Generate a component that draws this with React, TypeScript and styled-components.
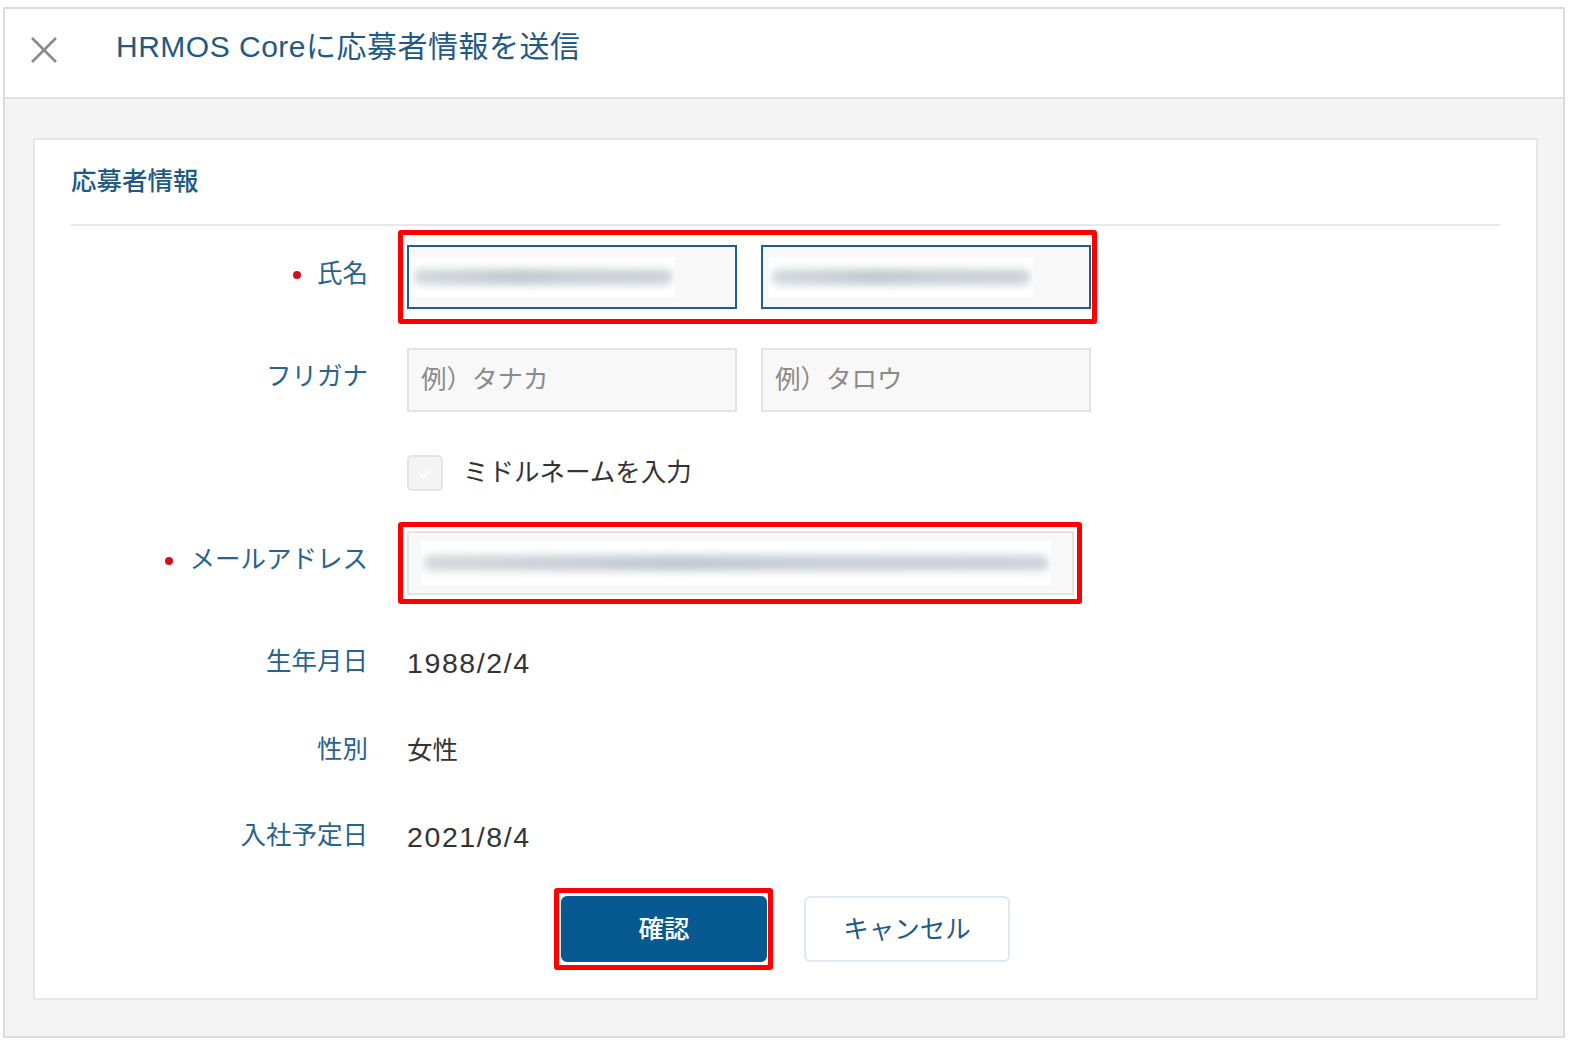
import React from 'react';
import styled, { createGlobalStyle } from 'styled-components';

const GlobalStyle = createGlobalStyle`
  html, body {
    margin: 0;
    padding: 0;
    background: #ffffff;
  }
  body {
    font-family: "Liberation Sans", "Noto Sans CJK JP", sans-serif;
    color: #333333;
  }
`;

// Outer modal frame
const Frame = styled.div`
  margin: 7px 11px 0 3px;
  height: 1031px;
  box-sizing: border-box;
  border: 2px solid #dcdcdc;
  display: flex;
  flex-direction: column;
  background: #f4f4f4;
`;

const Header = styled.div`
  height: 92px;
  box-sizing: border-box;
  display: flex;
  align-items: center;
  padding: 0 0 6px 24px;
  background: #ffffff;
  border-bottom: 2px solid #e2e2e2;
`;

const CloseButton = styled.button`
  width: 30px;
  height: 30px;
  padding: 0;
  border: none;
  background: transparent;
  display: flex;
  align-items: center;
  justify-content: center;
  cursor: pointer;
`;

const Title = styled.h1`
  margin: 0 0 0 57px;
  padding-bottom: 6px;
  font-size: 30px;
  line-height: 40px;
  font-weight: 400;
  color: #1f5a86;
  letter-spacing: 0.5px;
`;

const Body = styled.div`
  flex: 1;
  padding: 39px 25px 36px 28px;
`;

const Card = styled.div`
  height: 100%;
  box-sizing: border-box;
  background: #ffffff;
  border: 2px solid #e6e6e6;
  padding: 23px 36px 36px;
`;

const SectionTitle = styled.h2`
  margin: 0;
  padding-bottom: 25px;
  font-size: 25.5px;
  line-height: 36px;
  font-weight: 500;
  color: #1f5a86;
  border-bottom: 2px solid #e8e8e8;
`;

// One form row: label column + field column
const Row = styled.div<{ $top: number; $height: number }>`
  display: grid;
  grid-template-columns: 297px 1fr;
  column-gap: 39px;
  align-items: center;
  margin-top: ${(p) => p.$top}px;
  height: ${(p) => p.$height}px;
`;

const Label = styled.div`
  display: flex;
  justify-content: flex-end;
  align-items: center;
  padding-bottom: 8px;
  font-size: 25.5px;
  line-height: 36px;
  color: #28628f;
  white-space: nowrap;
`;

const Required = styled.span`
  width: 8px;
  height: 8px;
  border-radius: 50%;
  background: #d0101b;
  margin: 4px 16px 0 0;
`;

const Value = styled.div<{ $numeric?: boolean }>`
  padding-bottom: ${(p) => (p.$numeric ? 4 : 6)}px;
  font-size: ${(p) => (p.$numeric ? 28.5 : 25.5)}px;
  letter-spacing: ${(p) => (p.$numeric ? 1.6 : 0)}px;
  line-height: 36px;
  color: #333333;
`;

const Fields = styled.div`
  position: relative;
  display: flex;
  gap: 24px;
  width: fit-content;
`;

// Red annotation box drawn over the screenshot
const Highlight = styled.div<{ $t: number; $r: number; $b: number; $l: number }>`
  position: absolute;
  top: -${(p) => p.$t}px;
  right: -${(p) => p.$r}px;
  bottom: -${(p) => p.$b}px;
  left: -${(p) => p.$l}px;
  border: 5px solid #ff0000;
  border-radius: 3px;
  pointer-events: none;
`;

const Input = styled.div<{ $width: number; $focused?: boolean }>`
  width: ${(p) => p.$width}px;
  height: 64px;
  box-sizing: border-box;
  display: flex;
  align-items: center;
  padding: 0 0 0 12px;
  background: #f8f8f8;
  border: 2px solid ${(p) => (p.$focused ? '#1b5f93' : '#e3e3e3')};
`;

const Placeholder = styled.span`
  padding-bottom: 8px;
  font-size: 25.5px;
  color: #8a8a8a;
`;

// Masked (blurred) personal data
const Mask = styled.div<{ $width: number; $height: number; $offset: number }>`
  margin-left: ${(p) => p.$offset}px;
  width: ${(p) => p.$width}px;
  height: ${(p) => p.$height}px;
  background: #ffffff;
  display: flex;
  align-items: center;
  overflow: hidden;
`;

const MaskLine = styled.div`
  flex: 1;
  height: 16px;
  margin: 0 2px;
  border-radius: 8px;
  background: linear-gradient(90deg, #d3d8de 0%, #cbd1d8 20%, #bfc8d2 40%, #c9d0d8 65%, #cdd3da 100%);
  filter: blur(4px);
`;

const CheckRow = styled.label`
  display: flex;
  align-items: center;
  gap: 20px;
`;

const CheckText = styled.span`
  padding-bottom: 6px;
  font-size: 25.5px;
  color: #333333;
`;

const CheckBox = styled.span`
  width: 36px;
  height: 36px;
  box-sizing: border-box;
  border: 2px solid #e4e4e4;
  border-radius: 5px;
  background: #f4f4f4;
  display: flex;
  align-items: center;
  justify-content: center;
`;

const Buttons = styled.div`
  display: flex;
  justify-content: center;
  gap: 37px;
  margin-top: 39px;
`;

const ButtonWrap = styled.div`
  position: relative;
`;

const Button = styled.button<{ $primary?: boolean }>`
  width: 206px;
  height: 66px;
  box-sizing: border-box;
  padding: 0 0 5px;
  border-radius: 6px;
  font-family: inherit;
  font-size: 25.5px;
  cursor: pointer;
  background: ${(p) => (p.$primary ? '#065a91' : '#ffffff')};
  color: ${(p) => (p.$primary ? '#ffffff' : '#1f5a86')};
  border: 2px solid ${(p) => (p.$primary ? '#065a91' : '#e1e9ef')};
  font-weight: ${(p) => (p.$primary ? 500 : 400)};
`;

const App: React.FC = () => {
  return (
    <>
      <GlobalStyle />
      <Frame>
        <Header>
          <CloseButton aria-label="閉じる">
            <svg width="28" height="28" viewBox="0 0 28 28">
              <path d="M2 2 L26 26 M26 2 L2 26" stroke="#8b8b8b" strokeWidth="2.6" fill="none" />
            </svg>
          </CloseButton>
          <Title>HRMOS Coreに応募者情報を送信</Title>
        </Header>
        <Body>
          <Card>
            <SectionTitle>応募者情報</SectionTitle>

            <Row $top={19} $height={64}>
              <Label>
                <Required />
                氏名
              </Label>
              <Fields>
                <Input $width={330} $focused>
                  <Mask $width={264} $height={40} $offset={-10}>
                    <MaskLine />
                  </Mask>
                </Input>
                <Input $width={330} $focused>
                  <Mask $width={264} $height={40} $offset={-6}>
                    <MaskLine />
                  </Mask>
                </Input>
                <Highlight $t={15} $r={6} $b={15} $l={9} />
              </Fields>
            </Row>

            <Row $top={39} $height={64}>
              <Label>フリガナ</Label>
              <Fields>
                <Input $width={330}>
                  <Placeholder>例）タナカ</Placeholder>
                </Input>
                <Input $width={330}>
                  <Placeholder>例）タロウ</Placeholder>
                </Input>
              </Fields>
            </Row>

            <Row $top={39} $height={36}>
              <div />
              <CheckRow>
                <CheckBox>
                  <svg width="20" height="20" viewBox="0 0 20 20">
                    <path d="M4 10 L8.5 14.5 L16 5.5" stroke="#ffffff" strokeWidth="1.6" fill="none" />
                  </svg>
                </CheckBox>
                <CheckText>ミドルネームを入力</CheckText>
              </CheckRow>
            </Row>

            <Row $top={44} $height={64}>
              <Label>
                <Required />
                メールアドレス
              </Label>
              <Fields>
                <Input $width={667}>
                  <Mask $width={630} $height={44} $offset={0}>
                    <MaskLine />
                  </Mask>
                </Input>
                <Highlight $t={9} $r={8} $b={9} $l={9} />
              </Fields>
            </Row>

            <Row $top={48} $height={40}>
              <Label>生年月日</Label>
              <Value $numeric>1988/2/4</Value>
            </Row>

            <Row $top={48} $height={40}>
              <Label>性別</Label>
              <Value>女性</Value>
            </Row>

            <Row $top={46} $height={40}>
              <Label>入社予定日</Label>
              <Value $numeric>2021/8/4</Value>
            </Row>

            <Buttons>
              <ButtonWrap>
                <Button $primary>確認</Button>
                <Highlight $t={8} $r={6} $b={8} $l={7} />
              </ButtonWrap>
              <ButtonWrap>
                <Button>キャンセル</Button>
              </ButtonWrap>
            </Buttons>
          </Card>
        </Body>
      </Frame>
    </>
  );
};

export default App;
